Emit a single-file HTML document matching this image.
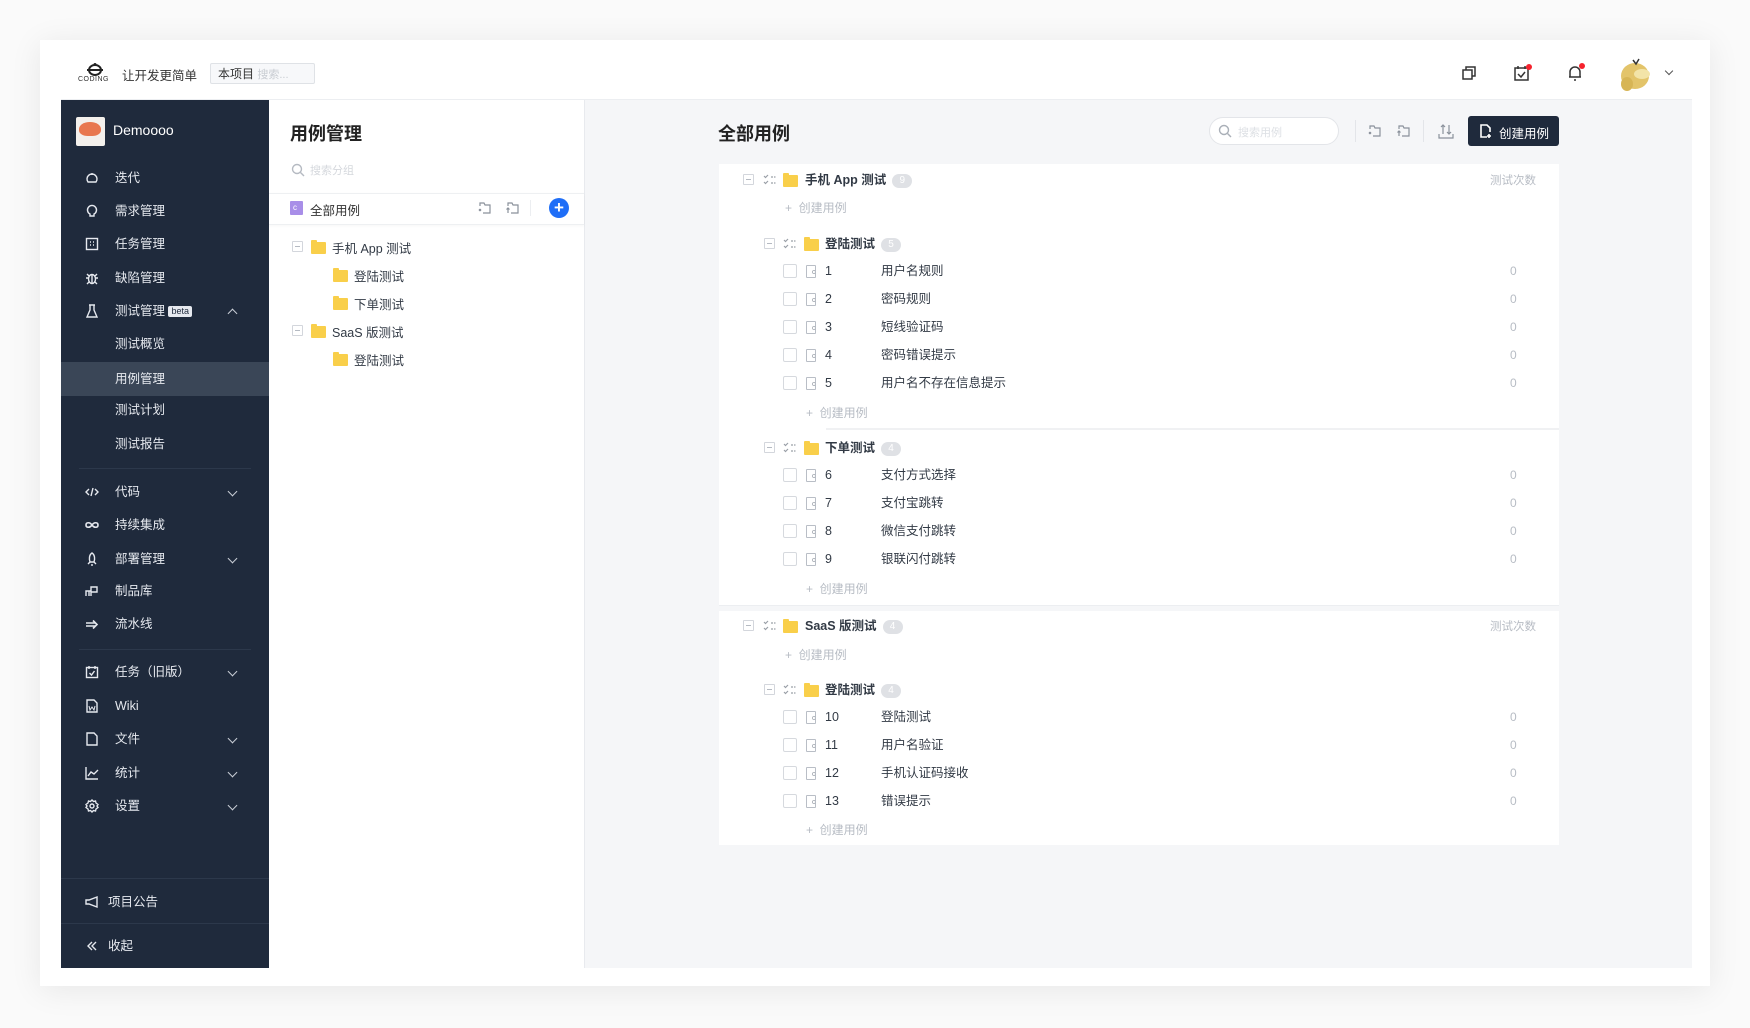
<!DOCTYPE html>
<html><head><meta charset="utf-8">
<style>
*{margin:0;padding:0;box-sizing:border-box}
body{width:1750px;height:1028px;background:#fafafa;font-family:"Liberation Sans","Noto Sans CJK SC",sans-serif;position:relative;overflow:hidden;color:#323a45}
.a{position:absolute;white-space:nowrap}
#card{position:absolute;left:40px;top:40px;width:1670px;height:946px;background:#fff;box-shadow:0 4px 30px rgba(0,0,0,.08)}
#side{position:absolute;left:61px;top:100px;width:208px;height:868px;background:#1f2a3c}
.si{position:absolute;left:0;width:208px;height:30px;line-height:30px;color:#e6e9ef;font-size:12.5px}
.si .ic{position:absolute;left:24px;top:8px;width:14px;height:14px}
.si .tx{position:absolute;left:54px}
.si .ch{position:absolute;left:168px;top:11px;width:7px;height:7px;border-right:1.5px solid #c9ced6;border-bottom:1.5px solid #c9ced6;transform:rotate(45deg)}
.si .up{transform:rotate(-135deg);top:14px}
.div{position:absolute;left:18px;width:172px;height:1px;background:#2c384b}
#mid{position:absolute;left:269px;top:100px;width:316px;height:868px;background:#fff;border-right:1px solid #e8eaee}
#right{position:absolute;left:585px;top:100px;width:1107px;height:868px;background:#f5f6f8}
.grp{position:absolute;left:719px;width:840px;background:#fff}
.r{position:absolute;height:20px;line-height:20px;font-size:12.5px;color:#323a45}
.mb{position:absolute;width:11px;height:11px;border:1px solid #d3d6dc;border-radius:1px}
.mb:after{content:"";position:absolute;left:2px;top:4px;width:5px;height:1px;background:#b5bac2}
.fd{position:absolute;width:15px;height:12px;background:#f9cf4a;border-radius:1px}
.fd:before{content:"";position:absolute;left:0;top:-2px;width:6px;height:3px;background:#f9cf4a;border-radius:1px 1px 0 0}
.cb{position:absolute;width:14px;height:14px;border:1px solid #d6d9de;border-radius:2px;background:#fff}
.doc{position:absolute;width:10px;height:13px;border:1px solid #b9bec6;border-radius:1px}
.doc:after{content:"c";position:absolute;left:5px;top:3px;font-size:7px;line-height:8px;color:#8a919b}
.badge{display:inline-block;height:14px;min-width:20px;padding:0 5px;line-height:14px;border-radius:7px;background:#dfe1e5;color:#fff;font-size:10px;text-align:center;vertical-align:middle;margin-left:6px;font-weight:normal}
.chk{position:absolute;width:14px;height:14px}
.add{position:absolute;font-size:12px;color:#b7bcc4}
.zero{position:absolute;left:1510px;font-size:12px;color:#b7bcc4}
.tree{position:absolute;font-size:12.5px;color:#323a45}
</style></head><body>
<div id="card"></div>

<svg width="0" height="0" style="position:absolute"><defs><symbol id="ck" viewBox="0 0 14 14"><g fill="none" stroke="#9aa0a8" stroke-width="1.2"><path d="M1 3l1.5 1.5L5 2M1 9l1.5 1.5L5 8M8 4h2M8 10h2M11 4h1.5M11 10h1.5"/></g></symbol></defs></svg>

<!-- top bar -->
<svg class="a" style="left:78px;top:62px" width="34" height="24" viewBox="0 0 34 24"><ellipse cx="17" cy="8" rx="6" ry="5" fill="none" stroke="#222" stroke-width="2"/><path d="M9 8h16" stroke="#222" stroke-width="2"/><circle cx="17" cy="2.5" r="1.5" fill="#222"/></svg>
<div class="a" style="left:78px;top:76px;font-size:7px;color:#333;letter-spacing:.5px">CODING</div>
<div class="a" style="left:122px;top:65px;font-size:12.5px;color:#333">让开发更简单</div>
<div class="a" style="left:210px;top:63px;width:105px;height:21px;border:1px solid #dfe2e6;border-radius:2px;background:#f7f8fa"></div>
<div class="a" style="left:218px;top:65px;font-size:12px;color:#333">本项目 <span style="color:#c8ccd2;font-size:11px">搜索...</span></div>

<svg class="a" style="left:1460px;top:64px" width="18" height="18" viewBox="0 0 18 18" fill="none" stroke="#333" stroke-width="1.5"><rect x="3" y="6" width="9" height="9"/><path d="M6 6V3h9v9h-3"/></svg>
<svg class="a" style="left:1513px;top:64px" width="20" height="18" viewBox="0 0 20 18" fill="none" stroke="#333" stroke-width="1.5"><rect x="2" y="4" width="13" height="12"/><path d="M5 2v3M12 2v3M5 10l3 3 4-5"/><circle cx="16" cy="3" r="3" fill="#f5222d" stroke="none"/></svg>
<svg class="a" style="left:1566px;top:63px" width="20" height="19" viewBox="0 0 20 19" fill="none" stroke="#333" stroke-width="1.5"><path d="M4 14V9a5 5 0 0 1 10 0v5H3h12M8 17h2"/><circle cx="16" cy="3" r="3" fill="#f5222d" stroke="none"/></svg>
<svg class="a" style="left:1617px;top:54px" width="38" height="40" viewBox="0 0 38 40"><ellipse cx="18" cy="22" rx="14" ry="13" fill="#e3c46a"/><ellipse cx="25" cy="20" rx="8" ry="5" fill="#f3e4a8"/><ellipse cx="10" cy="30" rx="6" ry="7" fill="#d7b555"/><path d="M16 6l3 4 3-5" stroke="#333" stroke-width="1.5" fill="none"/></svg>
<div class="a" style="left:1666px;top:68px;width:6px;height:6px;border-right:1.2px solid #555;border-bottom:1.2px solid #555;transform:rotate(45deg)"></div>
<div class="a" style="left:61px;top:99px;width:1631px;height:1px;background:#eceef1"></div>

<!-- sidebar -->
<div id="side">
 <div class="a" style="left:15px;top:17px;width:29px;height:29px;background:#f3f0ec;border-radius:2px;overflow:hidden"><div style="position:absolute;left:3px;top:5px;width:22px;height:14px;background:#e8774f;border-radius:50% 50% 40% 40%"></div></div>
 <div class="a" style="left:52px;top:22px;font-size:14px;color:#fff">Demoooo</div>

 <div class="si" style="top:63px"><svg class="ic" viewBox="0 0 14 14" fill="none" stroke="#e6e9ef" stroke-width="1.4"><path d="M3 11a5 5 0 1 1 8 0z M7 2v2"/></svg><span class="tx">迭代</span></div>
 <div class="si" style="top:96px"><svg class="ic" viewBox="0 0 14 14" fill="none" stroke="#e6e9ef" stroke-width="1.4"><path d="M5 10a4.5 4.5 0 1 1 4 0v2H5z"/></svg><span class="tx">需求管理</span></div>
 <div class="si" style="top:129px"><svg class="ic" viewBox="0 0 14 14" fill="none" stroke="#e6e9ef" stroke-width="1.4"><rect x="1.5" y="1.5" width="11" height="11"/><path d="M5 5h1M8 5h1M5 8h1M8 8h1"/></svg><span class="tx">任务管理</span></div>
 <div class="si" style="top:163px"><svg class="ic" viewBox="0 0 14 14" fill="none" stroke="#e6e9ef" stroke-width="1.4"><ellipse cx="7" cy="8" rx="3.5" ry="4.5"/><path d="M1 7h2.5M10.5 7H13M2 3l2 2M12 3l-2 2M2 13l2-2M12 13l-2-2M7 4v8"/></svg><span class="tx">缺陷管理</span></div>
 <div class="si" style="top:196px"><svg class="ic" viewBox="0 0 14 14" fill="none" stroke="#e6e9ef" stroke-width="1.4"><path d="M4 1h6M5 1v5l-3 7h10l-3-7V1"/></svg><span class="tx">测试管理 <span style="display:inline-block;background:#e6e9ef;color:#1f2a3c;font-size:9px;line-height:11px;padding:0 3px;border-radius:2px;vertical-align:1px">beta</span></span><span class="ch up"></span></div>
 <div class="si" style="top:229px"><span class="tx">测试概览</span></div>
 <div class="si" style="top:262px;height:34px;line-height:34px;background:#3a4657"><span class="tx">用例管理</span></div>
 <div class="si" style="top:295px"><span class="tx">测试计划</span></div>
 <div class="si" style="top:329px"><span class="tx">测试报告</span></div>
 <div class="div" style="top:368px"></div>
 <div class="si" style="top:377px"><svg class="ic" viewBox="0 0 14 14" fill="none" stroke="#e6e9ef" stroke-width="1.4"><path d="M4 4L1 7l3 3M10 4l3 3-3 3M8 3L6 11"/></svg><span class="tx">代码</span><span class="ch"></span></div>
 <div class="si" style="top:410px"><svg class="ic" viewBox="0 0 14 14" fill="none" stroke="#e6e9ef" stroke-width="1.6"><path d="M7 7c-2-3-6-3-6 0s4 3 6 0 6-3 6 0-4 3-6 0"/></svg><span class="tx">持续集成</span></div>
 <div class="si" style="top:444px"><svg class="ic" viewBox="0 0 14 14" fill="none" stroke="#e6e9ef" stroke-width="1.4"><path d="M7 1c3 2 3 6 2 9H5C4 7 4 3 7 1zM5 10l-2 2M9 10l2 2M7 12v2"/></svg><span class="tx">部署管理</span><span class="ch"></span></div>
 <div class="si" style="top:476px"><svg class="ic" viewBox="0 0 14 14" fill="none" stroke="#e6e9ef" stroke-width="1.4"><path d="M1 12V7h5v5M6 7V3h6v5H6M4 7v5"/></svg><span class="tx">制品库</span></div>
 <div class="si" style="top:509px"><svg class="ic" viewBox="0 0 14 14" fill="none" stroke="#e6e9ef" stroke-width="1.6"><path d="M1 6h9M1 9h9M8 3.5l4 4-4 4"/></svg><span class="tx">流水线</span></div>
 <div class="div" style="top:549px"></div>
 <div class="si" style="top:557px"><svg class="ic" viewBox="0 0 14 14" fill="none" stroke="#e6e9ef" stroke-width="1.4"><rect x="1.5" y="2.5" width="11" height="10"/><path d="M4 1v3M10 1v3M4.5 8l2 2 3-4"/></svg><span class="tx">任务（旧版）</span><span class="ch"></span></div>
 <div class="si" style="top:591px"><svg class="ic" viewBox="0 0 14 14" fill="none" stroke="#e6e9ef" stroke-width="1.4"><path d="M2 1h7l3 3v9H2z"/><path d="M4 7l1 4 2-3 2 3 1-4" stroke-width="1"/></svg><span class="tx">Wiki</span></div>
 <div class="si" style="top:624px"><svg class="ic" viewBox="0 0 14 14" fill="none" stroke="#e6e9ef" stroke-width="1.4"><path d="M2 1h7l3 3v9H2z"/></svg><span class="tx">文件</span><span class="ch"></span></div>
 <div class="si" style="top:658px"><svg class="ic" viewBox="0 0 14 14" fill="none" stroke="#e6e9ef" stroke-width="1.4"><path d="M1 1v12h12M3 10l3-4 3 2 4-4"/></svg><span class="tx">统计</span><span class="ch"></span></div>
 <div class="si" style="top:691px"><svg class="ic" viewBox="0 0 14 14" fill="none" stroke="#e6e9ef" stroke-width="1.4"><circle cx="7" cy="7" r="2"/><path d="M7 1l1.5 1.5 2-.5.5 2L13 5.5 12 7l1 1.5-2 1.5-.5 2-2-.5L7 13l-1.5-1.5-2 .5-.5-2L1 8.5 2 7 1 5.5l2-1.5.5-2 2 .5z"/></svg><span class="tx">设置</span><span class="ch"></span></div>
 <div class="a" style="left:0;top:778px;width:208px;height:1px;background:#2c384b"></div>
 <div class="si" style="top:787px"><svg class="ic" viewBox="0 0 14 14" fill="none" stroke="#e6e9ef" stroke-width="1.4"><path d="M12 2L4 5H1v4h3l8 3z"/></svg><span class="tx" style="left:47px">项目公告</span></div>
 <div class="a" style="left:0;top:823px;width:208px;height:1px;background:#2c384b"></div>
 <div class="si" style="top:831px"><svg class="ic" viewBox="0 0 14 14" fill="none" stroke="#e6e9ef" stroke-width="1.4"><path d="M7 3L3 7l4 4M11 3L7 7l4 4"/></svg><span class="tx" style="left:47px">收起</span></div>
</div>

<!-- middle -->
<div id="mid">
 <div class="a" style="left:21px;top:20px;font-size:18px;font-weight:bold;color:#222">用例管理</div>
 <svg class="a" style="left:22px;top:63px" width="14" height="14" viewBox="0 0 14 14" fill="none" stroke="#b5bac2" stroke-width="1.4"><circle cx="6" cy="6" r="4.5"/><path d="M9.5 9.5L13 13"/></svg>
 <div class="a" style="left:41px;top:62px;font-size:11px;color:#d5d8dd">搜索分组</div>
 <div class="a" style="left:0;top:93px;width:315px;height:32px;background:#fff;border-top:1px solid #eef0f2;border-bottom:1px solid #eef0f2;box-shadow:0 1px 3px rgba(0,0,0,.04)"></div>
 <div class="a" style="left:21px;top:101px;width:13px;height:14px;background:#a88ee8;border-radius:1px"><span style="position:absolute;left:3px;top:2px;font-size:8px;color:#fff">c</span></div>
 <div class="a" style="left:41px;top:100px;font-size:12.5px;color:#333">全部用例</div>
 <svg class="a" style="left:208px;top:101px" width="16" height="14" viewBox="0 0 16 14" fill="none" stroke="#8a919b" stroke-width="1.2"><path d="M3 5V2h4l1 2h5v8H6M2 8l2 2M4 8l-2 2"/></svg>
 <svg class="a" style="left:236px;top:101px" width="16" height="14" viewBox="0 0 16 14" fill="none" stroke="#8a919b" stroke-width="1.2"><path d="M3 5V2h4l1 2h5v8H6M3 7v5M1.5 8.5L3 7l1.5 1.5"/></svg>
 <div class="a" style="left:261px;top:100px;width:1px;height:16px;background:#eceef1"></div>
 <div class="a" style="left:280px;top:98px;width:20px;height:20px;border-radius:50%;background:#1f6ef7;color:#fff;font-size:17px;line-height:19px;text-align:center;font-weight:bold">+</div>

 <div class="mb" style="left:23px;top:141px"></div><div class="fd" style="left:42px;top:142px"></div><div class="tree a" style="left:63px;top:138px">手机 App 测试</div>
 <div class="fd" style="left:64px;top:170px"></div><div class="tree a" style="left:85px;top:166px">登陆测试</div>
 <div class="fd" style="left:64px;top:198px"></div><div class="tree a" style="left:85px;top:194px">下单测试</div>
 <div class="mb" style="left:23px;top:225px"></div><div class="fd" style="left:42px;top:226px"></div><div class="tree a" style="left:63px;top:222px">SaaS 版测试</div>
 <div class="fd" style="left:64px;top:254px"></div><div class="tree a" style="left:85px;top:250px">登陆测试</div>
</div>

<!-- right -->
<div id="right"></div>
<div class="a" style="left:718px;top:120px;font-size:18px;font-weight:bold;color:#222">全部用例</div>
<div class="a" style="left:1209px;top:117px;width:130px;height:28px;border:1px solid #e3e5e9;border-radius:14px;background:#fff"></div>
<svg class="a" style="left:1218px;top:124px" width="14" height="14" viewBox="0 0 14 14" fill="none" stroke="#aab0b8" stroke-width="1.4"><circle cx="6" cy="6" r="4.5"/><path d="M9.5 9.5L13 13"/></svg>
<div class="a" style="left:1238px;top:124px;font-size:11px;color:#dde0e4">搜索用例</div>
<div class="a" style="left:1355px;top:120px;width:1px;height:22px;background:#e3e5e9"></div>
<svg class="a" style="left:1367px;top:123px" width="16" height="16" viewBox="0 0 16 16" fill="none" stroke="#8a919b" stroke-width="1.2"><path d="M3 6V3h4l1 2h5v8H6M2 9l2 2M4 9l-2 2"/></svg>
<svg class="a" style="left:1396px;top:123px" width="16" height="16" viewBox="0 0 16 16" fill="none" stroke="#8a919b" stroke-width="1.2"><path d="M3 6V3h4l1 2h5v8H6M3 8v5M1.5 9.5L3 8l1.5 1.5"/></svg>
<div class="a" style="left:1423px;top:120px;width:1px;height:22px;background:#e3e5e9"></div>
<svg class="a" style="left:1438px;top:122px" width="16" height="18" viewBox="0 0 16 18" fill="none" stroke="#8a919b" stroke-width="1.2"><path d="M1 12v4h14v-4M5 12V3M3 5l2-2 2 2M11 3v9M9 10l2 2 2-2"/></svg>
<div class="a" style="left:1468px;top:116px;width:91px;height:30px;background:#1f2a3c;border-radius:3px"></div>
<svg class="a" style="left:1479px;top:123px" width="14" height="16" viewBox="0 0 14 16" fill="none" stroke="#fff" stroke-width="1.6"><path d="M8 14H2V2h6l3 3v4M10 11v4M8 13h4"/></svg>
<div class="a" style="left:1499px;top:123px;font-size:12.5px;color:#fff">创建用例</div>

<!-- group 1 -->
<div class="grp" style="top:164px;height:441px"></div>
<div class="a" style="left:719px;top:605px;width:840px;height:1px;background:#eceef1"></div>
<div class="a" style="left:826px;top:428px;width:733px;height:2px;background:#f0f1f3"></div>
<div class="mb" style="left:743px;top:174px"></div><svg class="chk" style="left:763px;top:173px"><use href="#ck"/></svg><div class="fd" style="left:783px;top:175px"></div>
<div class="r a" style="left:805px;top:170px;font-weight:bold">手机 App 测试<span class="badge">9</span></div>
<div class="a" style="left:1490px;top:172px;font-size:11.5px;color:#b7bcc4">测试次数</div>
<div class="add" style="left:785px;top:199px">+ &nbsp;创建用例</div>

<div class="mb" style="left:764px;top:238px"></div><svg class="chk" style="left:783px;top:237px"><use href="#ck"/></svg><div class="fd" style="left:804px;top:239px"></div>
<div class="r a" style="left:825px;top:234px;font-weight:bold">登陆测试<span class="badge">5</span></div>

<div class="cb" style="left:783px;top:264px"></div><div class="doc" style="left:806px;top:265px"></div><div class="r a" style="left:825px;top:261px">1</div><div class="r a" style="left:881px;top:261px">用户名规则</div><div class="zero" style="top:264px">0</div>
<div class="cb" style="left:783px;top:292px"></div><div class="doc" style="left:806px;top:293px"></div><div class="r a" style="left:825px;top:289px">2</div><div class="r a" style="left:881px;top:289px">密码规则</div><div class="zero" style="top:292px">0</div>
<div class="cb" style="left:783px;top:320px"></div><div class="doc" style="left:806px;top:321px"></div><div class="r a" style="left:825px;top:317px">3</div><div class="r a" style="left:881px;top:317px">短线验证码</div><div class="zero" style="top:320px">0</div>
<div class="cb" style="left:783px;top:348px"></div><div class="doc" style="left:806px;top:349px"></div><div class="r a" style="left:825px;top:345px">4</div><div class="r a" style="left:881px;top:345px">密码错误提示</div><div class="zero" style="top:348px">0</div>
<div class="cb" style="left:783px;top:376px"></div><div class="doc" style="left:806px;top:377px"></div><div class="r a" style="left:825px;top:373px">5</div><div class="r a" style="left:881px;top:373px">用户名不存在信息提示</div><div class="zero" style="top:376px">0</div>
<div class="add" style="left:806px;top:404px">+ &nbsp;创建用例</div>

<div class="mb" style="left:764px;top:442px"></div><svg class="chk" style="left:783px;top:441px"><use href="#ck"/></svg><div class="fd" style="left:804px;top:443px"></div>
<div class="r a" style="left:825px;top:438px;font-weight:bold">下单测试<span class="badge">4</span></div>
<div class="cb" style="left:783px;top:468px"></div><div class="doc" style="left:806px;top:469px"></div><div class="r a" style="left:825px;top:465px">6</div><div class="r a" style="left:881px;top:465px">支付方式选择</div><div class="zero" style="top:468px">0</div>
<div class="cb" style="left:783px;top:496px"></div><div class="doc" style="left:806px;top:497px"></div><div class="r a" style="left:825px;top:493px">7</div><div class="r a" style="left:881px;top:493px">支付宝跳转</div><div class="zero" style="top:496px">0</div>
<div class="cb" style="left:783px;top:524px"></div><div class="doc" style="left:806px;top:525px"></div><div class="r a" style="left:825px;top:521px">8</div><div class="r a" style="left:881px;top:521px">微信支付跳转</div><div class="zero" style="top:524px">0</div>
<div class="cb" style="left:783px;top:552px"></div><div class="doc" style="left:806px;top:553px"></div><div class="r a" style="left:825px;top:549px">9</div><div class="r a" style="left:881px;top:549px">银联闪付跳转</div><div class="zero" style="top:552px">0</div>
<div class="add" style="left:806px;top:580px">+ &nbsp;创建用例</div>

<!-- group 2 -->
<div class="grp" style="top:611px;height:234px"></div>
<div class="mb" style="left:743px;top:620px"></div><svg class="chk" style="left:763px;top:619px"><use href="#ck"/></svg><div class="fd" style="left:783px;top:621px"></div>
<div class="r a" style="left:805px;top:616px;font-weight:bold">SaaS 版测试<span class="badge">4</span></div>
<div class="a" style="left:1490px;top:618px;font-size:11.5px;color:#b7bcc4">测试次数</div>
<div class="add" style="left:785px;top:646px">+ &nbsp;创建用例</div>
<div class="mb" style="left:764px;top:684px"></div><svg class="chk" style="left:783px;top:683px"><use href="#ck"/></svg><div class="fd" style="left:804px;top:685px"></div>
<div class="r a" style="left:825px;top:680px;font-weight:bold">登陆测试<span class="badge">4</span></div>
<div class="cb" style="left:783px;top:710px"></div><div class="doc" style="left:806px;top:711px"></div><div class="r a" style="left:825px;top:707px">10</div><div class="r a" style="left:881px;top:707px">登陆测试</div><div class="zero" style="top:710px">0</div>
<div class="cb" style="left:783px;top:738px"></div><div class="doc" style="left:806px;top:739px"></div><div class="r a" style="left:825px;top:735px">11</div><div class="r a" style="left:881px;top:735px">用户名验证</div><div class="zero" style="top:738px">0</div>
<div class="cb" style="left:783px;top:766px"></div><div class="doc" style="left:806px;top:767px"></div><div class="r a" style="left:825px;top:763px">12</div><div class="r a" style="left:881px;top:763px">手机认证码接收</div><div class="zero" style="top:766px">0</div>
<div class="cb" style="left:783px;top:794px"></div><div class="doc" style="left:806px;top:795px"></div><div class="r a" style="left:825px;top:791px">13</div><div class="r a" style="left:881px;top:791px">错误提示</div><div class="zero" style="top:794px">0</div>
<div class="add" style="left:806px;top:821px">+ &nbsp;创建用例</div>
</body></html>
